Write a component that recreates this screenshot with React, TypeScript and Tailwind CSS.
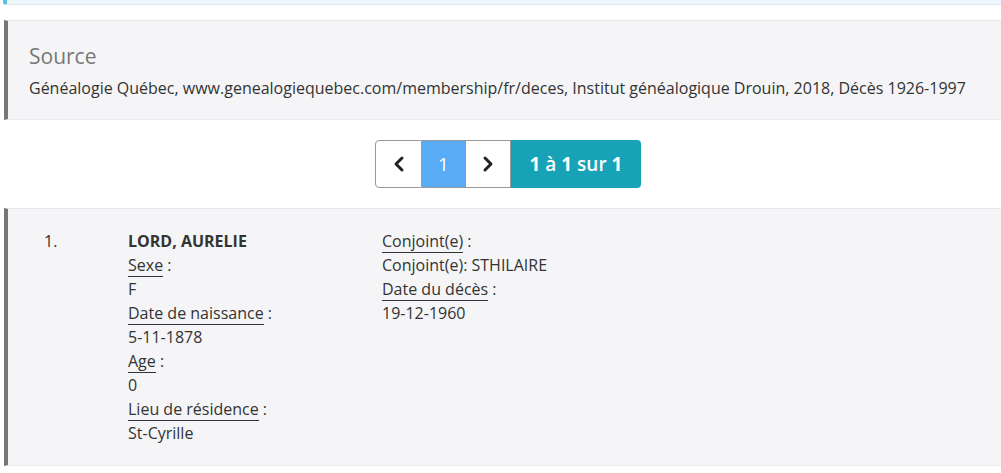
import React from 'react';

const font = { fontFamily: '"Open Sans", "Noto Sans", sans-serif' };

const Field: React.FC<{ label: string; value?: string }> = ({ label, value }) => (
  <>
    <div>
      <span className="border-b border-[#333]">{label}</span> :
    </div>
    {value !== undefined && <div>{value}</div>}
  </>
);

const App: React.FC = () => {
  return (
    <div className="w-[1001px] h-[473px] bg-white overflow-hidden text-[#333]" style={font}>
      <div className="h-[5px] ml-[3px] bg-[#eef5fb] border-l-4 border-[#5bc0de] border-b border-b-[#dde8f2] rounded-bl-[3px]" />

      <div className="mt-[15px] ml-[4px] bg-[#f5f5f7] border-l-4 border-l-[#777] border-t border-t-[#e8e8ea] border-b border-b-[#ececee] pl-[21px] pt-[21px] pb-[19px]">
        <div className="text-[21px] leading-[28px] text-[#777]">Source</div>
        <div className="mt-[6px] text-[16px] leading-[24px]">
          Généalogie Québec, www.genealogiequebec.com/membership/fr/deces, Institut généalogique Drouin, 2018, Décès 1926-1997
        </div>
      </div>

      <div className="flex justify-center mt-[20px] pl-[15px]">
        <div className="flex h-[48px] text-[19px]">
          <button className="w-[47px] flex items-center justify-center bg-white border border-[#999] rounded-l-[4px]">
            <svg width="14" height="18" viewBox="0 0 14 18" fill="none">
              <path d="M10 3 L4 9 L10 15" stroke="#222" strokeWidth="3" strokeLinecap="round" strokeLinejoin="round" />
            </svg>
          </button>
          <div className="w-[43px] flex items-center justify-center bg-[#5aabf5] text-white border-y border-[#999]">1</div>
          <button className="w-[46px] flex items-center justify-center bg-white border border-[#999]">
            <svg width="14" height="18" viewBox="0 0 14 18" fill="none">
              <path d="M4 3 L10 9 L4 15" stroke="#222" strokeWidth="3" strokeLinecap="round" strokeLinejoin="round" />
            </svg>
          </button>
          <div className="w-[130px] flex items-center justify-center bg-[#17a2b8] text-white font-semibold rounded-r-[4px]">
            <span>
              <b className="font-bold">1</b> à <b className="font-bold">1</b> sur <b className="font-bold">1</b>
            </span>
          </div>
        </div>
      </div>

      <div className="mt-[20px] ml-[4px] h-[258px] bg-[#f5f5f7] border-l-4 border-l-[#777] border-t border-t-[#e8e8ea] border-b border-b-[#ececee] pt-[20px] text-[16px] leading-[24px]">
        <div className="flex">
          <div className="w-[120px] pl-[36px]">1.</div>
          <div className="w-[254px]">
            <div className="font-bold">LORD, AURELIE</div>
            <Field label="Sexe" value="F" />
            <Field label="Date de naissance" value="5-11-1878" />
            <Field label="Age" value="0" />
            <Field label="Lieu de résidence" value="St-Cyrille" />
          </div>
          <div>
            <Field label="Conjoint(e)" />
            <div>Conjoint(e): STHILAIRE</div>
            <Field label="Date du décès" value="19-12-1960" />
          </div>
        </div>
      </div>
    </div>
  );
};

export default App;
